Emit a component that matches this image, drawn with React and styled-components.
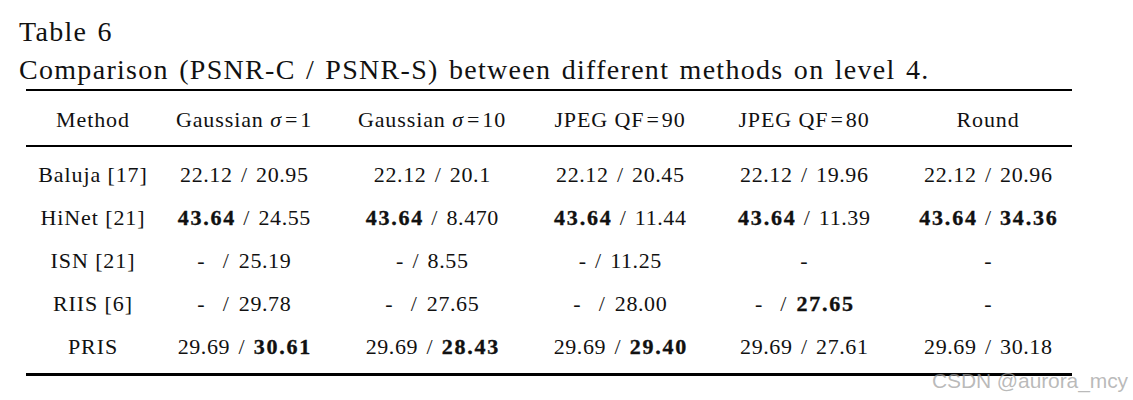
import React from "react";
import styled, { createGlobalStyle } from "styled-components";

const GlobalStyle = createGlobalStyle`
  html, body {
    margin: 0;
    padding: 0;
    background: #ffffff;
  }
  body {
    font-family: "Liberation Serif", "Times New Roman", serif;
    color: #111111;
  }
`;

const Page = styled.div`
  position: relative;
  width: 1133px;
  height: 400px;
  padding-top: 13px;
  box-sizing: border-box;
  overflow: hidden;
`;

const Caption = styled.div`
  padding-left: 19px;
  font-size: 28px;
  line-height: 38px;
  letter-spacing: 1.3px;
  word-spacing: 2px;
`;

const Table = styled.div`
  margin-left: 26px;
  width: 1046px;
`;

const Rule = styled.div`
  height: ${(p) => p.$w}px;
  background: #000;
`;

const Row = styled.div`
  display: grid;
  grid-template-columns: 134px 168px 208px 168px 200px 168px;
  font-size: 22px;
  line-height: ${(p) => (p.$head ? "24px" : "43px")};
  padding: ${(p) => (p.$head ? "17px 0 13px" : "0")};
`;

const Body = styled.div`
  padding: 6px 0 5px;
`;

const Cell = styled.div`
  text-align: center;
  white-space: nowrap;
  letter-spacing: ${(p) => (p.$text ? "0.9px" : "0")};
`;

const Num = styled.span`
  font-weight: ${(p) => (p.$bold ? 700 : 400)};
  letter-spacing: ${(p) => (p.$bold ? "1.8px" : "0.6px")};
  margin-right: ${(p) => (p.$bold ? "-1.8px" : "-0.6px")};
  -webkit-text-stroke: ${(p) => (p.$bold ? "0.35px #111" : "0")};
`;

const Slash = styled.span`
  display: inline-block;
  margin: 0 ${(p) => (p.$wide ? "10px" : "9px")} 0 ${(p) => (p.$wide ? "18px" : "9px")};
  color: #222;
`;

const Sigma = styled.i`
  margin-right: 1px;
`;

const Eq = styled.span`
  margin: 0 2px;
`;

const Watermark = styled.div`
  position: absolute;
  left: 932px;
  top: 369px;
  font-family: "Liberation Sans", Arial, sans-serif;
  font-size: 21px;
  color: rgba(160, 160, 160, 0.72);
  white-space: nowrap;
  letter-spacing: -0.1px;
`;

const headers = [
  "Method",
  <>Gaussian <Sigma>σ</Sigma><Eq>=</Eq>1</>,
  <>Gaussian <Sigma>σ</Sigma><Eq>=</Eq>10</>,
  <>JPEG QF<Eq>=</Eq>90</>,
  <>JPEG QF<Eq>=</Eq>80</>,
  "Round",
];

// each cell: [left, right, boldLeft, boldRight, wide] ; right === null => single dash
const rows = [
  {
    name: "Baluja [17]",
    cells: [
      ["22.12", "20.95"],
      ["22.12", "20.1"],
      ["22.12", "20.45"],
      ["22.12", "19.96"],
      ["22.12", "20.96"],
    ],
  },
  {
    name: "HiNet [21]",
    cells: [
      ["43.64", "24.55", true],
      ["43.64", "8.470", true],
      ["43.64", "11.44", true],
      ["43.64", "11.39", true],
      ["43.64", "34.36", true, true, true],
    ],
  },
  {
    name: "ISN [21]",
    cells: [
      ["-", "25.19", false, false, true],
      ["-", "8.55"],
      ["-", "11.25"],
      ["-", null],
      ["-", null],
    ],
  },
  {
    name: "RIIS [6]",
    cells: [
      ["-", "29.78", false, false, true],
      ["-", "27.65", false, false, true],
      ["-", "28.00", false, false, true],
      ["-", "27.65", false, true, true],
      ["-", null],
    ],
  },
  {
    name: "PRIS",
    cells: [
      ["29.69", "30.61", false, true],
      ["29.69", "28.43", false, true],
      ["29.69", "29.40", false, true],
      ["29.69", "27.61"],
      ["29.69", "30.18"],
    ],
  },
];

function Pair({ cell }) {
  const [l, r, bl, br, wide] = cell;
  if (r === null) return <Num>{l}</Num>;
  return (
    <>
      <Num $bold={bl}>{l}</Num>
      <Slash $wide={wide && l === "-"}>/</Slash>
      <Num $bold={br}>{r}</Num>
    </>
  );
}

export default function App() {
  return (
    <Page>
      <GlobalStyle />
      <Caption>
        Table 6
        <br />
        Comparison (PSNR-C / PSNR-S) between different methods on level 4.
      </Caption>
      <Table>
        <Rule $w={2} />
        <Row $head>
          {headers.map((h, i) => (
            <Cell key={i} $text>
              {h}
            </Cell>
          ))}
        </Row>
        <Rule $w={1.5} />
        <Body>
          {rows.map((row) => (
            <Row key={row.name}>
              <Cell $text>{row.name}</Cell>
              {row.cells.map((c, i) => (
                <Cell key={i}>
                  <Pair cell={c} />
                </Cell>
              ))}
            </Row>
          ))}
        </Body>
        <Rule $w={3} />
      </Table>
      <Watermark>CSDN @aurora_mcy</Watermark>
    </Page>
  );
}
